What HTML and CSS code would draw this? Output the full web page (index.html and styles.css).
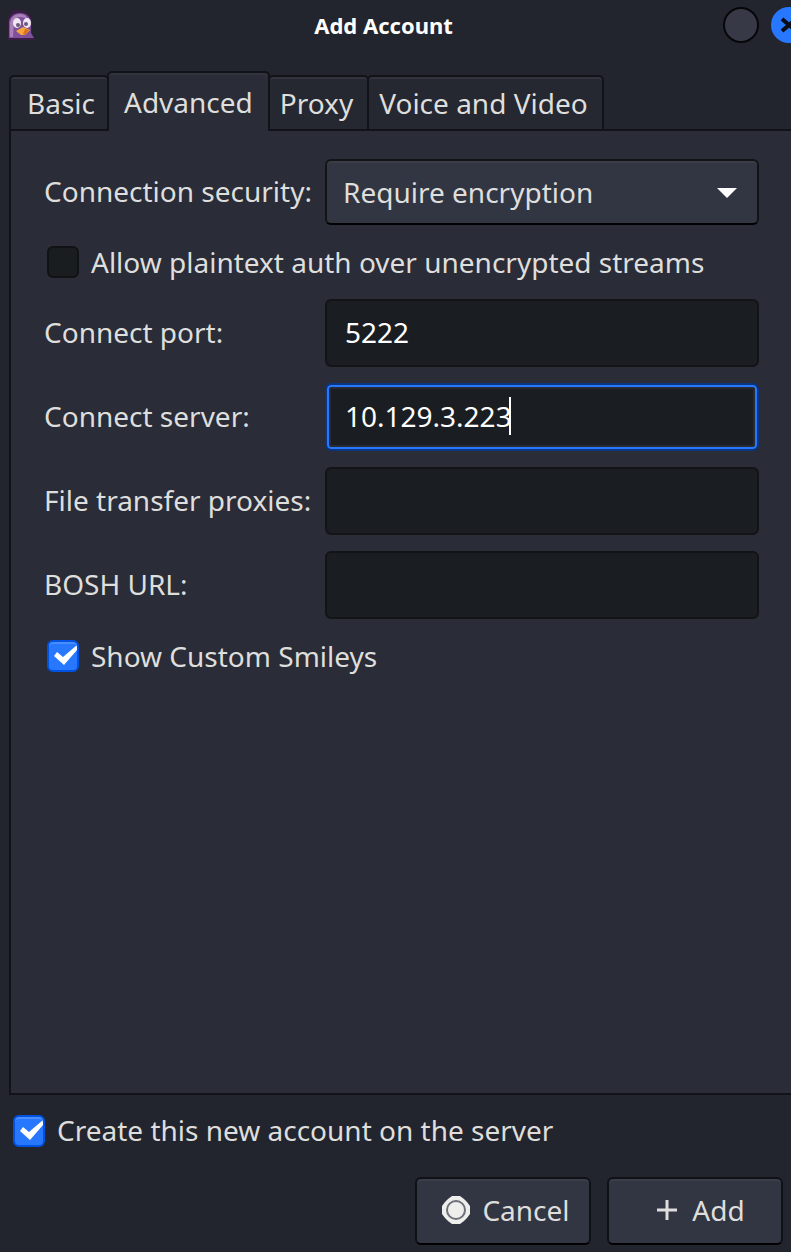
FILE: index.html
```html
<!DOCTYPE html>
<html lang="en">
<head>
<meta charset="UTF-8">
<meta name="viewport" content="width=device-width, initial-scale=1">
<title>Add Account</title>
<link rel="stylesheet" href="styles.css">
</head>
<body>

<header class="titlebar">
  <svg class="app-icon" width="28" height="32" viewBox="0 0 28 32" aria-hidden="true">
    <path d="M0 31V12C0 8 1 5 4 3V1h6c8 0 14 5 14 12v12l3 6z" fill="#3a1d45"/>
    <path d="M1 29V14C1 8 6 4 12 4s11 4 11 10v10l3 5z" fill="#81509a"/>
    <path d="M2 28V14C3 8 7 5 12 5c5 0 7 3 8 6-4-4-12-4-14 0L5 28z" fill="#a981b9"/>
    <ellipse cx="9" cy="14" rx="4" ry="5" fill="#efe8f2"/>
    <ellipse cx="19" cy="14" rx="4" ry="5" fill="#efe8f2"/>
    <circle cx="10" cy="16" r="2" fill="#6d5a78"/>
    <circle cx="18" cy="15" r="2" fill="#6d5a78"/>
    <path d="M8 22l7-4 7 3-5 5h-4z" fill="#f5a63c"/>
    <path d="M15 25l2-5 4 1-4 5z" fill="#e0701a"/>
  </svg>
  <h1 class="title">Add Account</h1>
  <div class="window-buttons">
    <button type="button" class="win-btn" aria-label="Maximize"></button>
    <button type="button" class="win-btn win-close" aria-label="Close">
      <svg width="18" height="18" viewBox="0 0 18 18" aria-hidden="true">
        <path d="M2 3l14 12M16 3L2 15" stroke="#0b0d14" stroke-width="4" fill="none"/>
      </svg>
    </button>
  </div>
</header>

<form class="account-form">
  <div class="tabs" role="tablist">
    <button type="button" class="tab tab-first" role="tab">Basic</button>
    <button type="button" class="tab active" role="tab" aria-selected="true">Advanced</button>
    <button type="button" class="tab" role="tab">Proxy</button>
    <button type="button" class="tab" role="tab">Voice and Video</button>
  </div>

  <div class="panel" role="tabpanel">
    <label for="security">Connection security:</label>
    <select id="security" class="select">
      <option>Require encryption</option>
    </select>

    <div class="check-row">
      <input type="checkbox" id="plaintext" class="check">
      <label for="plaintext">Allow plaintext auth over unencrypted streams</label>
    </div>

    <label for="port">Connect port:</label>
    <input type="text" id="port" class="field" value="5222">

    <label for="server">Connect server:</label>
    <div class="field-wrap">
      <input type="text" id="server" class="field focused" value="10.129.3.223">
      <span class="caret"></span>
    </div>

    <label for="proxies">File transfer proxies:</label>
    <input type="text" id="proxies" class="field">

    <label for="bosh">BOSH URL:</label>
    <input type="text" id="bosh" class="field">

    <div class="check-row">
      <input type="checkbox" id="smileys" class="check" checked>
      <label for="smileys">Show Custom Smileys</label>
    </div>
  </div>

  <div class="create-row">
    <input type="checkbox" id="create" class="check" checked>
    <label for="create">Create this new account on the server</label>
  </div>

  <div class="actions">
    <button type="button" class="btn">
      <svg width="28" height="28" viewBox="0 0 28 28" aria-hidden="true">
        <path d="M10 0h8l4 3 3 3 3 4v8l-3 4-3 3-4 3h-8l-4-3-3-3-3-4v-8l3-4 3-3z" fill="#eeeeec"/>
        <circle cx="14" cy="14" r="9" fill="none" stroke="#6d7078" stroke-width="2"/>
      </svg>
      Cancel
    </button>
    <button type="submit" class="btn btn-add">
      <svg width="20" height="20" viewBox="0 0 20 20" aria-hidden="true">
        <path d="M10 0v20M0 10h20" stroke="#dededd" stroke-width="3"/>
      </svg>
      Add
    </button>
  </div>
</form>

</body>
</html>
```

FILE: styles.css
```css
* {
  box-sizing: border-box;
}
body {
  margin: 0;
  min-height: 100vh;
  display: flex;
  flex-direction: column;
  overflow-x: hidden;
  background-color: #23252e;
  color: #dededc;
  font-family: "Noto Sans", sans-serif;
  font-size: 28px;
  line-height: 40px;
}
button, input, select {
  font: inherit;
  color: inherit;
}
label {
  white-space: nowrap;
}

/* title bar */
.titlebar {
  position: relative;
  display: flex;
  align-items: center;
  justify-content: center;
  height: 50px;
}
.app-icon {
  position: absolute;
  left: 8px;
  top: 9px;
}
.title {
  margin: 0 24px 0 0;
  font-size: 22px;
  font-weight: bold;
  color: #fff;
}
.window-buttons {
  position: absolute;
  right: -16px;
  top: 7px;
  display: flex;
  gap: 12px;
}
.win-btn {
  display: flex;
  align-items: center;
  justify-content: center;
  width: 36px;
  height: 36px;
  padding: 0;
  border: 2px solid #060709;
  border-radius: 50%;
  background-color: #373a46;
}
.win-close {
  border-color: #2777ff;
  background-color: #2777ff;
}

/* tabs */
.account-form {
  flex: 1;
  display: flex;
  flex-direction: column;
  padding-top: 21px;
}
.tabs {
  display: flex;
  align-items: flex-end;
  margin: 0 0 -2px 9px;
}
.tab {
  height: 56px;
  margin-left: -2px;
  padding: 0 14px 0 10px;
  border: 2px solid #121318;
  border-radius: 5px 5px 0 0;
  background-color: #252731;
  box-shadow: inset 0 2px #32343d;
  white-space: nowrap;
}
.tab-first {
  margin-left: 0;
  padding: 0 12px 0 16px;
}
.tab.active {
  position: relative;
  height: 60px;
  padding: 0 15px;
  border-bottom: none;
  background-color: #2a2c37;
  z-index: 1;
}

/* tab content */
.panel {
  flex: 1;
  display: grid;
  grid-template-columns: 269px 1fr;
  gap: 16px 12px;
  align-content: start;
  align-items: center;
  margin-left: 9px;
  padding: 28px 32px 28px 33px;
  border: 2px solid #121318;
  border-right: none;
  background-color: #2a2c37;
}
.panel > label {
  padding-bottom: 2px;
}
.field, .select {
  display: block;
  width: 100%;
  height: 68px;
  padding: 0 18px 2px;
  border: 2px solid #121417;
  border-radius: 6px;
  background-color: #1a1d21;
  color: #fff;
  outline: none;
}
.select {
  height: 66px;
  padding: 0 16px;
  border-bottom-color: #000;
  appearance: none;
  color: #dededc;
  background: url('data:image/svg+xml,<svg xmlns="http://www.w3.org/2000/svg" width="20" height="12"><path d="M0 2h20L10 12z" fill="white"/></svg>') right 20px center no-repeat #323542;
  box-shadow: inset 0 2px #3b3e49;
}
.field-wrap {
  position: relative;
}
.field.focused {
  border-color: #0a357f;
  box-shadow: inset 0 0 0 2px #2777ff, inset 0 0 0 4px #282b33;
}
.caret {
  position: absolute;
  left: 184px;
  top: 14px;
  width: 2px;
  height: 38px;
  background-color: #fff;
}

/* check boxes */
.check-row {
  grid-column: 1 / -1;
  padding-left: 3px;
}
.check-row, .create-row {
  display: flex;
  align-items: center;
  gap: 12px;
  height: 42px;
}
.check {
  appearance: none;
  width: 32px;
  height: 32px;
  margin: 0;
  border: 2px solid #101214;
  border-radius: 6px;
  background-color: #1a1d20;
}
.check:checked {
  border-color: #0052e0;
  background: url('data:image/svg+xml,<svg xmlns="http://www.w3.org/2000/svg" width="28" height="28"><path d="M5 14l3-4 6 5L28 3v5L15 23z" fill="white"/></svg>') center no-repeat #2777ff;
  box-shadow: inset 0 2px #4a8dff;
}

/* bottom area */
.create-row {
  margin: 15px 0 25px;
  padding-left: 13px;
}
.create-row label {
  padding-bottom: 2px;
}
.actions {
  display: flex;
  justify-content: flex-end;
  gap: 16px;
  padding: 0 8px 7px 0;
}
.btn {
  display: flex;
  align-items: center;
  justify-content: center;
  gap: 12px;
  width: 176px;
  height: 68px;
  padding: 0 0 2px 6px;
  border: 2px solid #101116;
  border-bottom-color: #000;
  border-radius: 6px;
  background-color: #323542;
  box-shadow: inset 0 2px #3b3e49;
}
.btn-add {
  gap: 15px;
  padding-left: 12px;
}
```
